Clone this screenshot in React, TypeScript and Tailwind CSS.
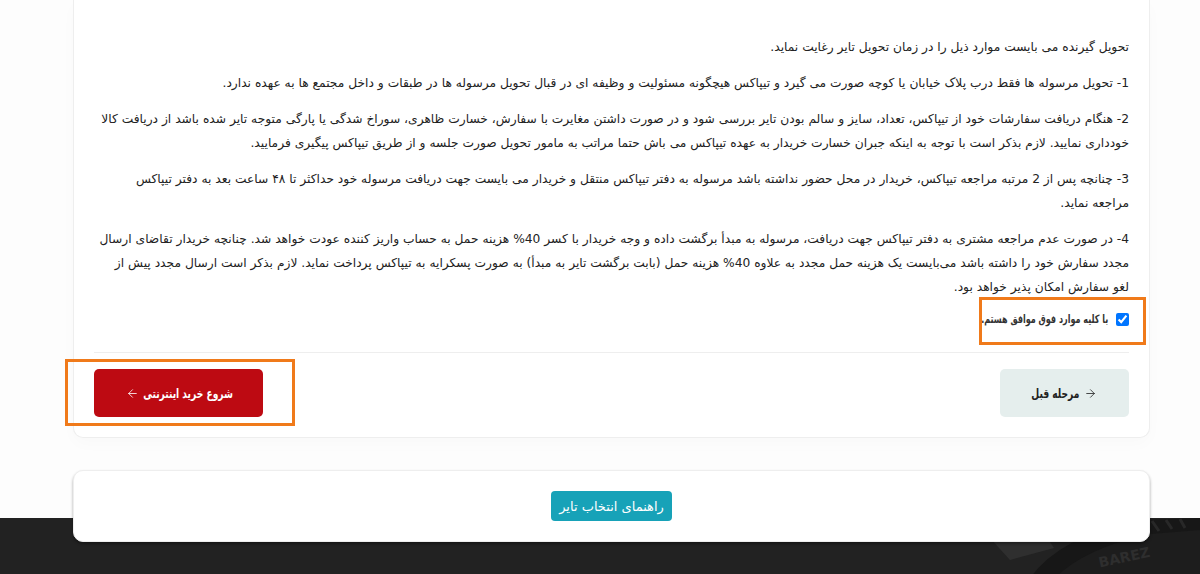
import React from "react";
import { ArrowLeft, ArrowRight } from "lucide-react";

const paras: string[][] = [
  ["تحویل گیرنده می بایست موارد ذیل را در زمان تحویل تایر رغایت نماید."],
  ["1- تحویل مرسوله ها فقط درب پلاک خیابان یا کوچه صورت می گیرد و تیپاکس هیچگونه مسئولیت و وظیفه ای در قبال تحویل مرسوله ها در طبقات و داخل مجتمع ها به عهده ندارد."],
  [
    "2- هنگام دریافت سفارشات خود از تیپاکس، تعداد، سایز و سالم بودن تایر بررسی شود و در صورت داشتن مغایرت با سفارش، خسارت ظاهری، سوراخ شدگی یا پارگی متوجه تایر شده باشد از دریافت کالا",
    "خودداری نمایید. لازم بذکر است با توجه به اینکه جبران خسارت خریدار به عهده تیپاکس می باش حتما مراتب به مامور تحویل صورت جلسه و از طریق تیپاکس پیگیری فرمایید.",
  ],
  [
    "3- چنانچه پس از 2 مرتبه مراجعه تیپاکس، خریدار در محل حضور نداشته باشد مرسوله به دفتر تیپاکس منتقل و خریدار می بایست جهت دریافت مرسوله خود حداکثر تا ۴۸ ساعت بعد به دفتر تیپاکس",
    "مراجعه نماید.",
  ],
  [
    "4- در صورت عدم مراجعه مشتری به دفتر تیپاکس جهت دریافت، مرسوله به مبدأ برگشت داده و وجه خریدار با کسر 40% هزینه حمل به حساب واریز کننده عودت خواهد شد. چنانچه خریدار تقاضای ارسال",
    "مجدد سفارش خود را داشته باشد می‌بایست یک هزینه حمل مجدد به علاوه 40% هزینه حمل (بابت برگشت تایر به مبدأ) به صورت پسکرایه به تیپاکس پرداخت نماید. لازم بذکر است ارسال مجدد پیش از",
    "لغو سفارش امکان پذیر خواهد بود.",
  ],
];

function Tire() {
  return (
    <svg width="230" height="60" viewBox="0 0 230 60" className="absolute right-0 top-0">
      <path d="M60 60 Q 90 18 170 2 L 230 0 L 230 60 Z" fill="#171717" />
      <path d="M85 60 Q 115 30 180 16 L 230 12 L 230 60 Z" fill="#1d1d1d" />
      <path d="M20 20 L 72 12 L 84 30 L 40 42 Z" fill="#3b3b3b" opacity="0.55" />
      <text x="128" y="44" fill="#2e2e2e" fontSize="14" fontWeight="bold" fontFamily="DejaVu Sans, sans-serif" transform="rotate(-12 155 38)">BAREZ</text>
      <path d="M168 5 L 176 15 M182 3 L 189 13 M196 2 L 202 11 M210 1 L 215 10" stroke="#282828" strokeWidth="3" />
    </svg>
  );
}

function Squeezed({ w, children }: { w: number; children: React.ReactNode }) {
  return (
    <span className="flex justify-center whitespace-nowrap" style={{ width: w }}>
      <span className="inline-block scale-x-[0.7]">{children}</span>
    </span>
  );
}

export default function App() {
  return (
    <div className="min-h-[574px] bg-[#fdfdfd] overflow-hidden font-['DejaVu_Sans',sans-serif]">
      <div className="relative z-10 ml-[73px] w-[1077px]">
        <div dir="rtl" className="bg-white border border-t-0 border-[#eeeeee] rounded-b-[10px] px-[20px] pt-[35px] pb-[20px] shadow-[0_6px_16px_rgba(0,0,0,0.02)]">
          <div className="text-[12.25px] leading-[24px] text-[#222222]">
            {paras.map((p, i) => (
              <p key={i} className="mb-[12px]">
                {p.map((l, j) => (
                  <span key={j} className="block whitespace-nowrap">{l}</span>
                ))}
              </p>
            ))}
          </div>
          <div className="relative flex items-center gap-[7px] pt-0 pb-[24px]">
            <input type="checkbox" defaultChecked readOnly className="w-[13px] h-[13px] m-0 accent-[#0075ff]" />
            <span className="text-[11.5px] font-bold text-[#333333]">
              <Squeezed w={128}>با کلیه موارد فوق موافق هستم.</Squeezed>
            </span>
            <div className="absolute right-[-17px] top-[-14px] w-[167px] h-[48px] border-[3px] border-[#f07a1a]" />
          </div>
          <div className="border-t border-[#eeeeee]" />
          <div className="flex justify-between items-center mt-[16px]">
            <button className="flex items-center justify-center gap-[5px] w-[129px] h-[48px] rounded-[5px] bg-[#e5eeed] text-[13px] font-bold text-[#222222]">
              <ArrowRight size={13} strokeWidth={1.5} />
              <Squeezed w={46}>مرحله قبل</Squeezed>
            </button>
            <div className="relative">
              <button className="flex items-center justify-center gap-[6px] w-[169px] h-[48px] rounded-[5px] bg-[#bd0a12] text-[13px] font-bold text-white">
                <Squeezed w={86}>شروع خرید اینترنتی</Squeezed>
                <ArrowLeft size={13} strokeWidth={1.5} />
              </button>
              <div className="absolute left-[-29px] top-[-10px] w-[230px] h-[67px] border-[3px] border-[#f07a1a]" />
            </div>
          </div>
        </div>
        <div dir="rtl" className="mt-[32px] h-[72px] bg-white border border-[#eeeeee] rounded-[10px] flex items-center justify-center shadow-[0_2px_3px_rgba(0,0,0,0.35)]">
          <button className="w-[121px] h-[30px] rounded-[4px] bg-[#17a2b8] text-white text-[13px]">راهنمای انتخاب تایر</button>
        </div>
      </div>
      <div className="relative mt-[-24px] h-[80px] bg-[#222222]">
        <Tire />
      </div>
    </div>
  );
}
